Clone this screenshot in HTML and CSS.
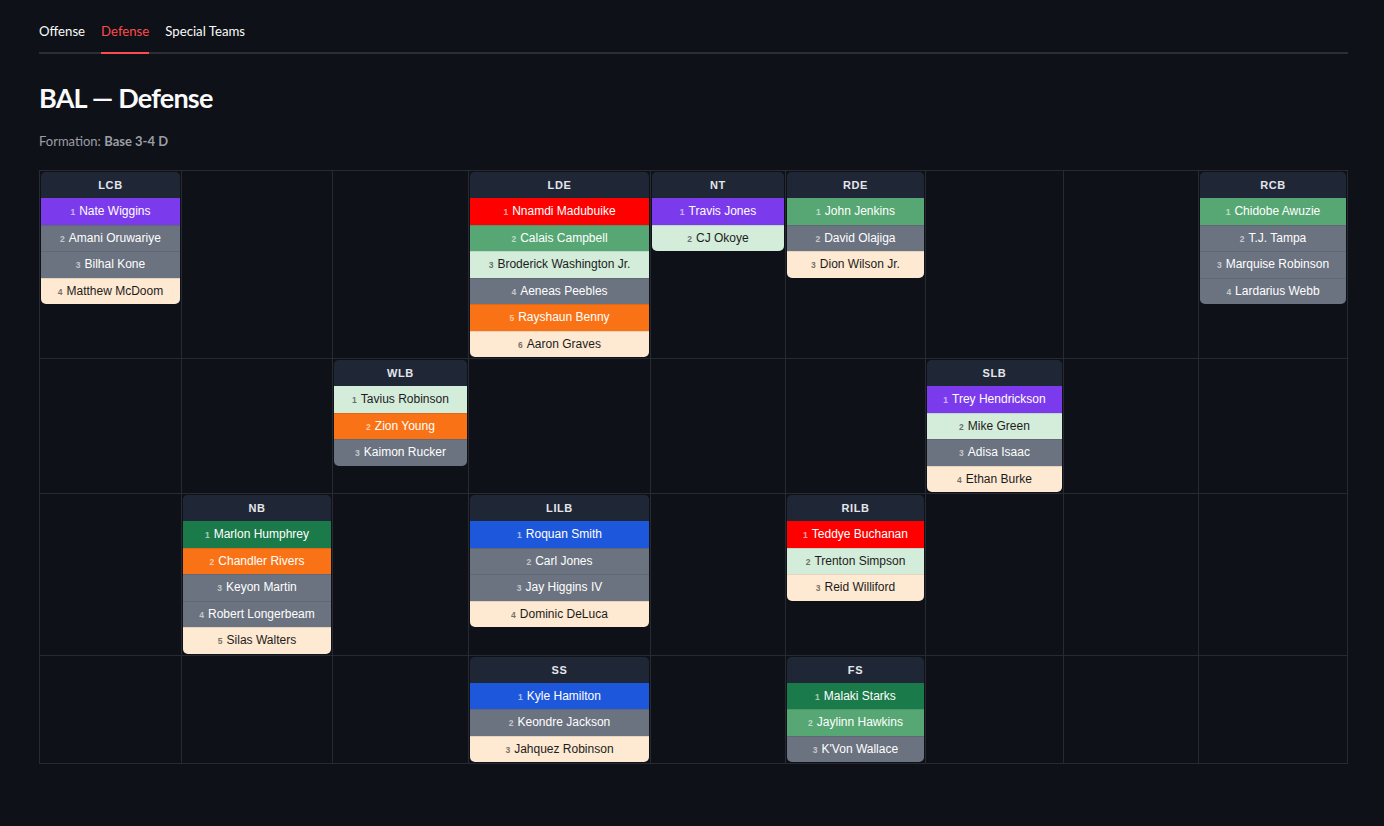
FILE: index.html
```html
<!DOCTYPE html>
<html lang="en">
<head>
<meta charset="utf-8">
<title>BAL — Defense</title>
<link rel="stylesheet" href="styles.css">
</head>
<body>
<div class="page">
  <div class="tabs">
    <div class="tab">Offense</div>
    <div class="tab active">Defense</div>
    <div class="tab">Special Teams</div>
  </div>
  <h2 class="title">BAL — Defense</h2>
  <div class="formation">Formation: <b>Base 3-4 D</b></div>

  <div class="depth">
    <!-- Row 1 -->
    <div class="cell">
      <div class="card">
        <div class="pos">LCB</div>
        <div class="pl purple"><span class="rk">1</span>Nate Wiggins</div>
        <div class="pl gray"><span class="rk">2</span>Amani Oruwariye</div>
        <div class="pl gray"><span class="rk">3</span>Bilhal Kone</div>
        <div class="pl peach"><span class="rk">4</span>Matthew McDoom</div>
      </div>
    </div>
    <div class="cell"></div>
    <div class="cell"></div>
    <div class="cell">
      <div class="card">
        <div class="pos">LDE</div>
        <div class="pl red"><span class="rk">1</span>Nnamdi Madubuike</div>
        <div class="pl mgreen"><span class="rk">2</span>Calais Campbell</div>
        <div class="pl lgreen"><span class="rk">3</span>Broderick Washington Jr.</div>
        <div class="pl gray"><span class="rk">4</span>Aeneas Peebles</div>
        <div class="pl orange"><span class="rk">5</span>Rayshaun Benny</div>
        <div class="pl peach"><span class="rk">6</span>Aaron Graves</div>
      </div>
    </div>
    <div class="cell">
      <div class="card">
        <div class="pos">NT</div>
        <div class="pl purple"><span class="rk">1</span>Travis Jones</div>
        <div class="pl lgreen"><span class="rk">2</span>CJ Okoye</div>
      </div>
    </div>
    <div class="cell">
      <div class="card">
        <div class="pos">RDE</div>
        <div class="pl mgreen"><span class="rk">1</span>John Jenkins</div>
        <div class="pl gray"><span class="rk">2</span>David Olajiga</div>
        <div class="pl peach"><span class="rk">3</span>Dion Wilson Jr.</div>
      </div>
    </div>
    <div class="cell"></div>
    <div class="cell"></div>
    <div class="cell">
      <div class="card">
        <div class="pos">RCB</div>
        <div class="pl mgreen"><span class="rk">1</span>Chidobe Awuzie</div>
        <div class="pl gray"><span class="rk">2</span>T.J. Tampa</div>
        <div class="pl gray"><span class="rk">3</span>Marquise Robinson</div>
        <div class="pl gray"><span class="rk">4</span>Lardarius Webb</div>
      </div>
    </div>

    <!-- Row 2 -->
    <div class="cell"></div>
    <div class="cell"></div>
    <div class="cell">
      <div class="card">
        <div class="pos">WLB</div>
        <div class="pl lgreen"><span class="rk">1</span>Tavius Robinson</div>
        <div class="pl orange"><span class="rk">2</span>Zion Young</div>
        <div class="pl gray"><span class="rk">3</span>Kaimon Rucker</div>
      </div>
    </div>
    <div class="cell"></div>
    <div class="cell"></div>
    <div class="cell"></div>
    <div class="cell">
      <div class="card">
        <div class="pos">SLB</div>
        <div class="pl purple"><span class="rk">1</span>Trey Hendrickson</div>
        <div class="pl lgreen"><span class="rk">2</span>Mike Green</div>
        <div class="pl gray"><span class="rk">3</span>Adisa Isaac</div>
        <div class="pl peach"><span class="rk">4</span>Ethan Burke</div>
      </div>
    </div>
    <div class="cell"></div>
    <div class="cell"></div>

    <!-- Row 3 -->
    <div class="cell"></div>
    <div class="cell">
      <div class="card">
        <div class="pos">NB</div>
        <div class="pl dgreen"><span class="rk">1</span>Marlon Humphrey</div>
        <div class="pl orange"><span class="rk">2</span>Chandler Rivers</div>
        <div class="pl gray"><span class="rk">3</span>Keyon Martin</div>
        <div class="pl gray"><span class="rk">4</span>Robert Longerbeam</div>
        <div class="pl peach"><span class="rk">5</span>Silas Walters</div>
      </div>
    </div>
    <div class="cell"></div>
    <div class="cell">
      <div class="card">
        <div class="pos">LILB</div>
        <div class="pl blue"><span class="rk">1</span>Roquan Smith</div>
        <div class="pl gray"><span class="rk">2</span>Carl Jones</div>
        <div class="pl gray"><span class="rk">3</span>Jay Higgins IV</div>
        <div class="pl peach"><span class="rk">4</span>Dominic DeLuca</div>
      </div>
    </div>
    <div class="cell"></div>
    <div class="cell">
      <div class="card">
        <div class="pos">RILB</div>
        <div class="pl red"><span class="rk">1</span>Teddye Buchanan</div>
        <div class="pl lgreen"><span class="rk">2</span>Trenton Simpson</div>
        <div class="pl peach"><span class="rk">3</span>Reid Williford</div>
      </div>
    </div>
    <div class="cell"></div>
    <div class="cell"></div>
    <div class="cell"></div>

    <!-- Row 4 -->
    <div class="cell"></div>
    <div class="cell"></div>
    <div class="cell"></div>
    <div class="cell">
      <div class="card">
        <div class="pos">SS</div>
        <div class="pl blue"><span class="rk">1</span>Kyle Hamilton</div>
        <div class="pl gray"><span class="rk">2</span>Keondre Jackson</div>
        <div class="pl peach"><span class="rk">3</span>Jahquez Robinson</div>
      </div>
    </div>
    <div class="cell"></div>
    <div class="cell">
      <div class="card">
        <div class="pos">FS</div>
        <div class="pl dgreen"><span class="rk">1</span>Malaki Starks</div>
        <div class="pl mgreen"><span class="rk">2</span>Jaylinn Hawkins</div>
        <div class="pl gray"><span class="rk">3</span>K'Von Wallace</div>
      </div>
    </div>
    <div class="cell"></div>
    <div class="cell"></div>
    <div class="cell"></div>
  </div>
</div>
</body>
</html>
```

FILE: styles.css
```css
html, body {
  margin: 0;
  padding: 0;
  background: #0e1117;
}

body {
  font-family: Lato, "Noto Sans", sans-serif;
  color: #fafafa;
}

.page {
  width: 1309px;
  padding: 20px 0 40px 39px;
}

/* Tabs */
.tabs {
  display: flex;
  gap: 16px;
  border-bottom: 2px solid #2c2e35;
}

.tab {
  font-size: 13.2px;
  line-height: 22px;
  padding-bottom: 10px;
  margin-bottom: -2px;
  border-bottom: 2px solid transparent;
  color: #fafafa;
}

.tab.active {
  color: #ff4b4b;
  border-bottom-color: #ff4b4b;
}

/* Heading */
.title {
  margin: 27px 0 0;
  font-size: 27px;
  line-height: 34px;
  font-weight: 700;
  letter-spacing: -0.8px;
  color: #fafafa;
}

.formation {
  margin-top: 17px;
  font-size: 13px;
  line-height: 18px;
  color: #9b9ea6;
}

.formation b {
  font-weight: 700;
}

/* Depth chart grid */
.depth {
  margin-top: 20px;
  display: grid;
  grid-template-columns: 141px 150px 135px 181px 134px 139px 137px 134px 148px;
  gap: 1px;
  padding: 1px;
  background: #272a31;
}

.cell {
  background: #0e1117;
  padding: 1px;
  min-height: 20px;
}

.card {
  border-radius: 5px;
  overflow: hidden;
  background: #1f2737;
  font-family: "Liberation Sans", Arial, sans-serif;
}

.pos {
  text-align: center;
  font-size: 11px;
  font-weight: 700;
  letter-spacing: 0.6px;
  line-height: 16px;
  padding: 5px 4px;
  color: #e3e6ea;
  background: #1f2737;
}

.pl {
  text-align: center;
  font-size: 12px;
  line-height: 18.5px;
  height: 26.5px;
  box-sizing: border-box;
  padding: 4px 4px;
  white-space: nowrap;
}

.pl + .pl {
  box-shadow: inset 0 1px 0 rgba(0, 0, 0, 0.09);
}

.rk {
  font-size: 8.5px;
  line-height: 1;
  font-weight: 700;
  opacity: 0.6;
  margin-right: 4px;
}

.purple { background: #7c3aed; color: #ffffff; }
.gray   { background: #6b7280; color: #ffffff; }
.peach  { background: #fee9d2; color: #1c1c1c; }
.lgreen { background: #d4ecda; color: #1c1c1c; }
.red    { background: #ff0000; color: #ffffff; }
.mgreen { background: #56a773; color: #ffffff; }
.dgreen { background: #1b7a4a; color: #ffffff; }
.orange { background: #f97316; color: #ffffff; }
.blue   { background: #1d57db; color: #ffffff; }
```
